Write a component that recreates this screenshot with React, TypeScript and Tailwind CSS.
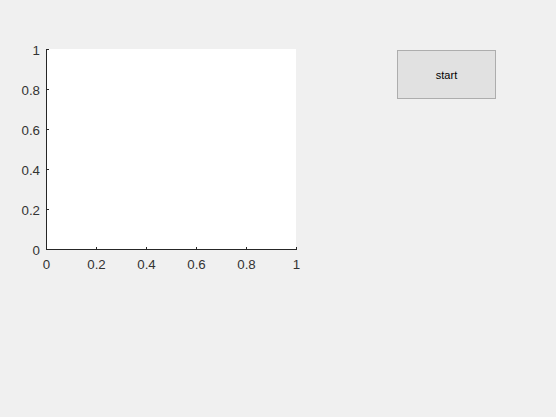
import React from "react";

const yTicks = [0, 0.2, 0.4, 0.6, 0.8, 1];
const xTicks = [0, 0.2, 0.4, 0.6, 0.8, 1];

function Axes() {
  const x0 = 46;
  const y0 = 49;
  const w = 250;
  const h = 200;
  return (
    <svg width={310} height={280} className="block shrink-0" style={{ fontFamily: '"Liberation Sans", Arial, sans-serif' }}>
      <rect x={x0} y={y0} width={w} height={h} fill="#ffffff" />
      <line x1={x0 + 0.5} y1={y0} x2={x0 + 0.5} y2={y0 + h + 1} stroke="#262626" strokeWidth={1} />
      <line x1={x0} y1={y0 + h + 0.5} x2={x0 + w + 1} y2={y0 + h + 0.5} stroke="#262626" strokeWidth={1} />
      {yTicks.map((t, i) => {
        const y = y0 + h - i * 40 + 0.5;
        return (
          <g key={"y" + i}>
            <line x1={x0} y1={y} x2={x0 + 3} y2={y} stroke="#262626" strokeWidth={1} />
            <text x={40} y={y + 5} textAnchor="end" fontSize={13.3} fill="#333333">
              {String(t)}
            </text>
          </g>
        );
      })}
      {xTicks.map((t, i) => {
        const x = x0 + i * 50 + 0.5;
        return (
          <g key={"x" + i}>
            <line x1={x} y1={y0 + h + 1} x2={x} y2={y0 + h - 2} stroke="#262626" strokeWidth={1} />
            <text x={x} y={269} textAnchor="middle" fontSize={13.3} fill="#333333">
              {String(t)}
            </text>
          </g>
        );
      })}
    </svg>
  );
}

export default function App() {
  return (
    <div className="w-[556px] h-[417px] bg-[#f0f0f0] flex items-start overflow-hidden">
      <Axes />
      <div className="ml-[87px] mt-[50px]">
        <button className="w-[99px] h-[49px] pt-[2px] border border-[#adadad] bg-[#e1e1e1] text-[11px] text-black flex items-center justify-center font-['Liberation_Sans',Arial,sans-serif]">
          start
        </button>
      </div>
    </div>
  );
}
